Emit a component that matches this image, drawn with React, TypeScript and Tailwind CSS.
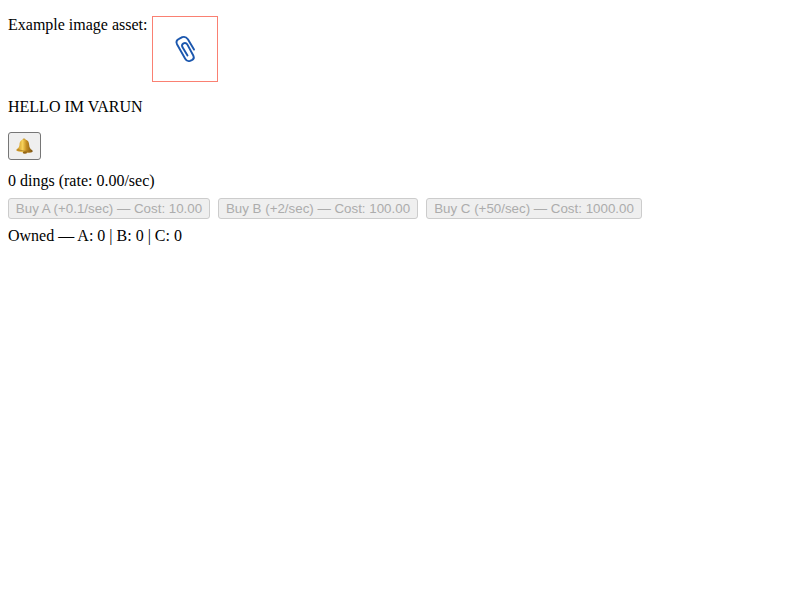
function Paperclip() {
  return (
    <svg className="block" width="64" height="64" viewBox="0 0 64 64" fill="none" stroke="#1b57ae" strokeWidth="1.9" strokeLinecap="round" strokeLinejoin="round" aria-hidden="true">
      <path d="M41 32.6L34.9 22.3Q32.6 19 29.3 20.2L26 21.9Q22.3 23.7 24 27.2L32.2 41.8Q34 44.9 37 43.9L38.8 43.1Q41.8 41.6 40.4 38.8L34.4 27.6Q32.8 25.1 30.5 26.3Q28.2 27.6 29.4 30.1L34.5 38.5" />
    </svg>
  );
}

function Bell() {
  return (
    <svg className="block" width="17" height="17" viewBox="0 0 17 17" aria-hidden="true">
      <defs>
        <linearGradient id="brass" x1="0" x2="1">
          <stop offset="0" stopColor="#c58a1b" />
          <stop offset=".38" stopColor="#f7d25a" />
          <stop offset=".62" stopColor="#c58e20" />
          <stop offset="1" stopColor="#795315" />
        </linearGradient>
      </defs>
      <circle cx="8" cy="1.8" r="1.4" fill="#c39128" />
      <path d="M8.2 1.6C4.9 1.6 3.6 3.9 3.5 6.5C3.4 9 2.6 10 1 11C-.1 11.9.4 12.8 1.9 13.3C5.5 14.6 11 15.2 15 14.5C16.8 14.2 17.1 13.1 16 12.1C14.2 10.8 13.4 9.4 13.2 6.9C13 4 11.7 1.6 8.2 1.6Z" fill="url(#brass)" />
      <path d="M1.8 11.8Q8 14 15.6 13" fill="none" stroke="#8b5d16" strokeWidth=".6" />
      <ellipse cx="8.9" cy="14.6" rx="2.1" ry="1.2" fill="#936516" />
    </svg>
  );
}

const upgrades = [
  { label: "Buy A (+0.1/sec) — Cost: 10.00", width: "w-[202px]" },
  { label: "Buy B (+2/sec) — Cost: 100.00", width: "w-[200px]" },
  { label: "Buy C (+50/sec) — Cost: 1000.00", width: "w-[216px]" },
];

export default function App() {
  return (
    <main className="min-h-screen bg-white px-2 pt-4 font-['Liberation_Serif','Times_New_Roman',serif] text-base leading-[18px] text-black">
      <div className="flex h-[66px] items-start">
        <span className="w-36 whitespace-nowrap">Example image asset:</span>
        <div className="size-[66px] border border-[#fa8072]"><Paperclip /></div>
      </div>
      <p className="mt-4">HELLO IM VARUN</p>
      <button aria-label="Ding" className="mt-4 flex h-7 w-[33px] items-center justify-center rounded-[3px] border border-[#767676] bg-[#efefef]">
        <Bell />
      </button>
      <p className="mt-3">0 dings (rate: 0.00/sec)</p>
      <div className="mt-2 flex gap-2">
        {upgrades.map(({ label, width }) => (
          <button key={label} disabled className={`${width} h-[21px] rounded-[3px] border border-[#cccccc] bg-[#efefef] text-center font-['Liberation_Sans',Arial,sans-serif] text-[13.333px] leading-[19px] whitespace-nowrap text-[#acacac]`}>
            {label}
          </button>
        ))}
      </div>
      <p className="mt-2">Owned — A: 0 | B: 0 | C: 0</p>
    </main>
  );
}
